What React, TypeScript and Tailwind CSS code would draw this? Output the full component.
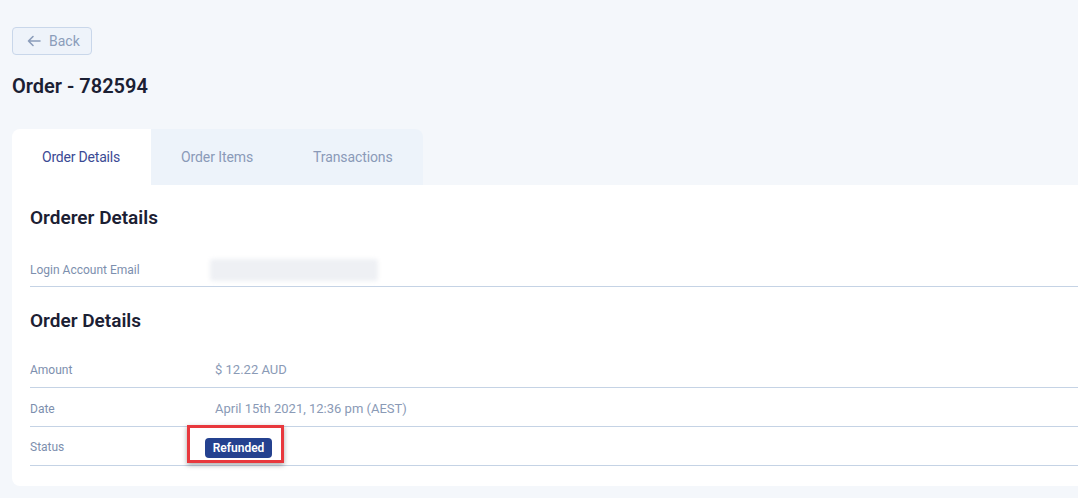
import React from "react";

const font = { fontFamily: "Roboto, 'Noto Sans', sans-serif" };

function Row({ label, children }: { label: string; children: React.ReactNode }) {
  return (
    <div className="flex h-[39px] items-center border-b border-[#c5d3e5] pt-[3px]">
      <div className="w-[185px] shrink-0 text-[12px] text-[#7d8fae]">{label}</div>
      <div className="flex-1 text-[13px] text-[#8a9ab6]">{children}</div>
    </div>
  );
}

export default function App() {
  return (
    <div className="min-h-[498px] w-full bg-[#f4f7fb] pl-[12px] pt-[27px]" style={font}>
      <button className="flex h-[28px] w-[80px] items-center gap-[8px] rounded-[4px] border border-[#c9d7ea] bg-[#eef3fa] pl-[14px] text-[14px] text-[#8b9dba]">
        <svg width="14" height="12" viewBox="0 0 14 12" fill="none" stroke="#8b9dba" strokeWidth="1.6" strokeLinecap="round" strokeLinejoin="round">
          <path d="M13 6H1.5M6 1.5L1.5 6L6 10.5" />
        </svg>
        <span>Back</span>
      </button>
      <h1 className="mt-[19px] text-[20px] font-semibold leading-[24px] text-[#1b2033]">Order - 782594</h1>
      <div className="mt-[31px]">
        <div className="flex">
          <div className="flex h-[56px] items-center rounded-tl-[8px] bg-white pl-[30px] pr-[31px] text-[14px] tracking-[-0.2px] text-[#3b4a94]">Order Details</div>
          <div className="flex rounded-tr-[8px] bg-[#edf3fa]">
            <div className="flex h-[56px] items-center px-[30px] text-[14px] tracking-[-0.1px] text-[#8a9ab8]">Order Items</div>
            <div className="flex h-[56px] items-center px-[30px] text-[14px] tracking-[-0.1px] text-[#8a9ab8]">Transactions</div>
          </div>
        </div>
        <div className="rounded-bl-[8px] bg-white pb-[20px] pl-[18px]">
          <h2 className="pt-[21px] text-[19px] font-semibold leading-[24px] text-[#1b2033]">Orderer Details</h2>
          <div className="mt-[17px] flex h-[40px] items-center border-b border-[#c5d3e5] pt-[6px]">
            <div className="w-[180px] shrink-0 text-[12px] text-[#7d8fae]">Login Account Email</div>
            <div className="h-[22px] w-[168px] rounded-[3px] bg-[#eef0f4] blur-[2px]"></div>
          </div>
          <h2 className="mt-[22px] text-[19px] font-semibold leading-[24px] text-[#1b2033]">Order Details</h2>
          <div className="mt-[16px]">
            <Row label="Amount">$ 12.22 AUD</Row>
            <Row label="Date">April 15th 2021, 12:36 pm (AEST)</Row>
            <div className="flex h-[39px] items-center border-b border-[#c5d3e5] pt-[2px]">
              <div className="w-[175px] shrink-0 text-[12px] text-[#7d8fae]">Status</div>
              <div className="relative">
                <span className="inline-flex h-[20px] w-[67px] items-center justify-center rounded-[4px] bg-[#24418f] text-[12px] font-semibold text-white">Refunded</span>
                <div className="pointer-events-none absolute left-[-18px] top-[-10px] h-[38px] w-[97px] border-[3px] border-[#e8383d] shadow-[0_2px_5px_rgba(0,0,0,0.35)]"></div>
              </div>
            </div>
          </div>
        </div>
      </div>
    </div>
  );
}
